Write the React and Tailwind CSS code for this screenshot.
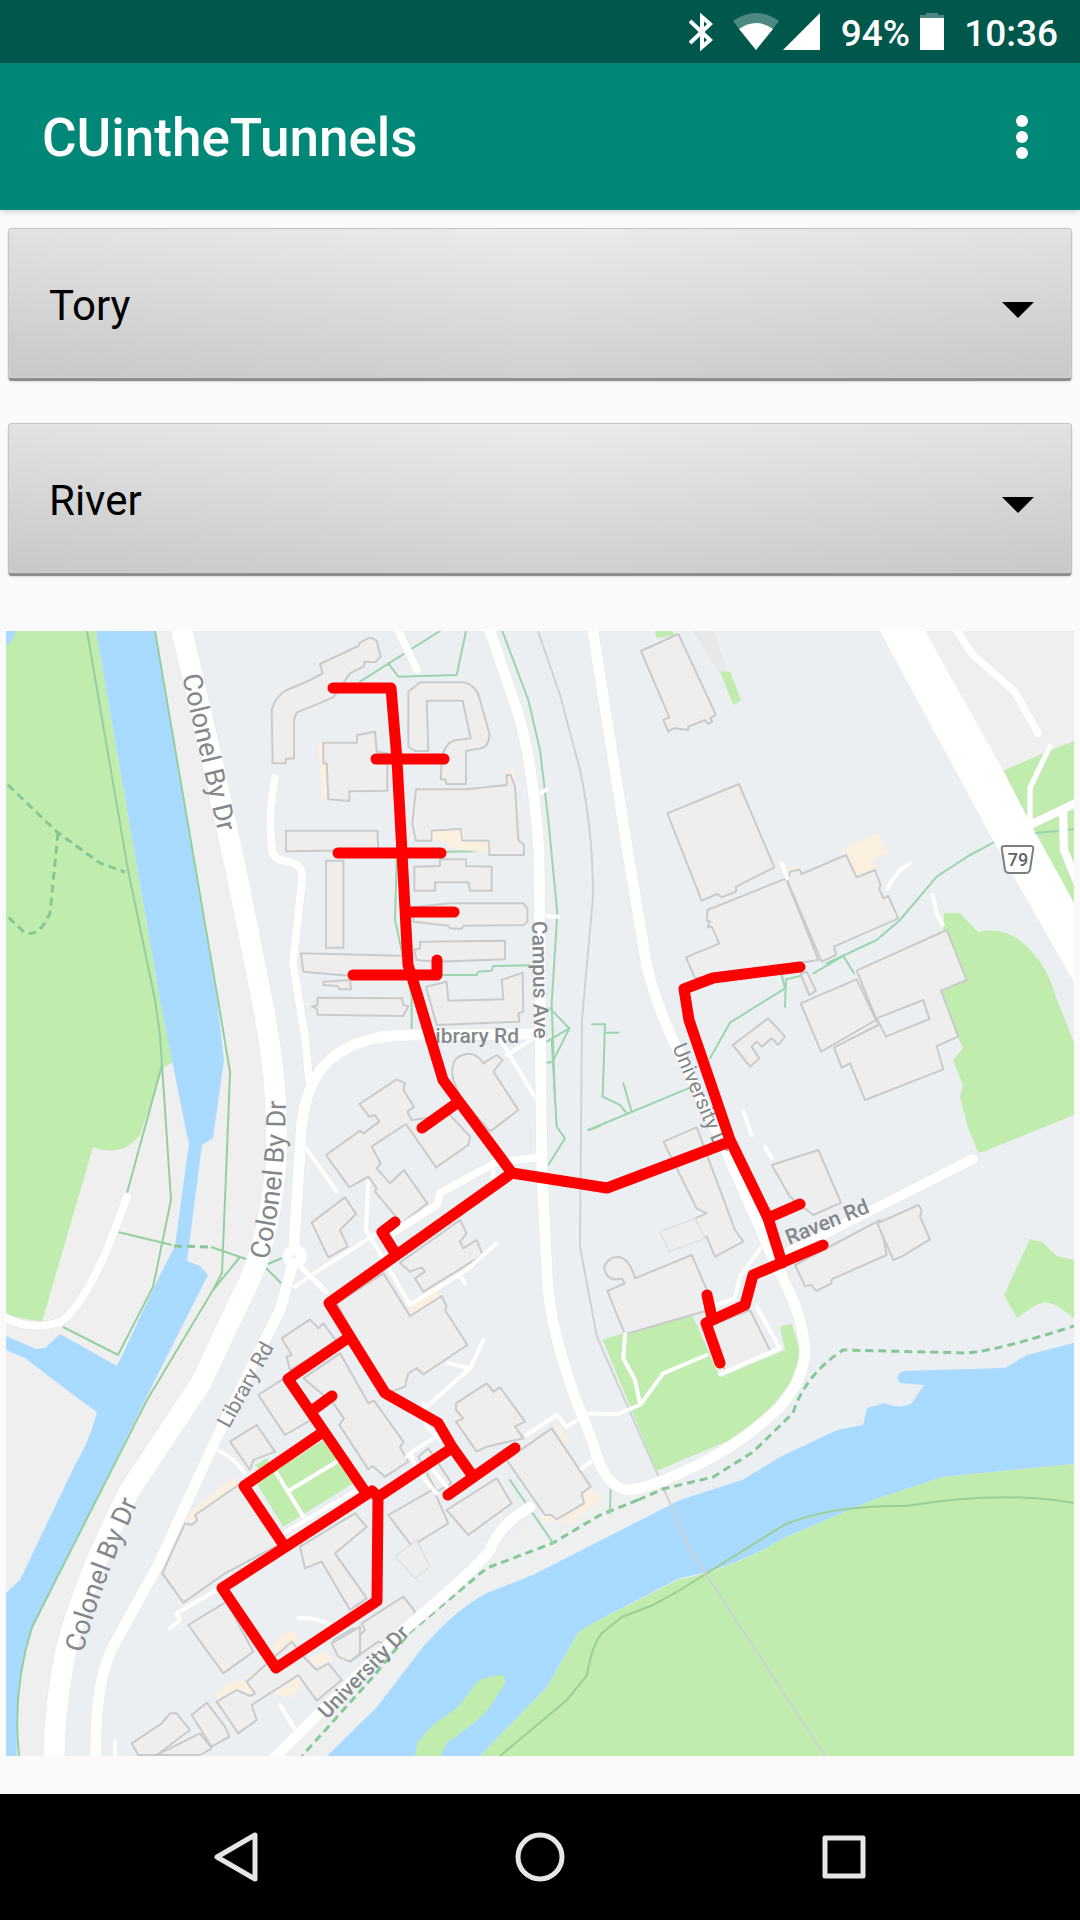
import React from "react";

const PLACES = ["Tory", "River", "Library", "Dunton", "Minto", "Residence Commons"];

/* Map artwork is drafted in district sheets at three units per map unit. */
const SHEETS = [
  {
    id: "north",
    at: "translate(250 620) scale(0.33333)",
    patches: [],
    walks: [
      "M330,185 L570,33", "M415,130 L445,170 L620,165 L648,33",
      "M757,33 L835,240 L870,390 L895,600 L922,880 L905,1150 L915,1440",
      "M440,720 L435,900 L485,1130 V1230", "M590,695 L710,693",
      "M580,1065 H680 L685,1055 L725,1052 L730,1038 L835,1036",
      "M900,1165 L958,1225 L908,1325 L885,1330", "M890,1265 L958,1225",
    ],
    lanes: ["M862,525 L890,508", "M872,888 L925,890", "M770,1305 L860,1250", "M740,1240 L860,1440"],
    peach: ["M205,368 L320,365 L312,345 L350,332 L375,340 V400 L240,430 V538 L215,535Z", "M765,450 H795 V500 H765Z"],
    buildings: [
      "M68,430 L65,270 Q75,230 110,210 L175,183 L218,160 L210,132 L325,78 L330,68 L360,52 L380,62 L392,110 L375,127 L345,125 L340,140 L300,160 L250,232 L140,278 L132,300 V415 L107,417 V430Z",
      "M220,368 H320 L322,345 L375,335 L380,395 L412,400 V512 L298,514 V543 L235,538 L230,430 H220Z",
      "M475,380 V215 L510,187 H640 Q680,195 690,240 L718,340 Q720,385 680,387 L648,393 V492 H590 L585,478 H572 L575,430 Q580,365 620,360 L662,355 L638,242 H530 L535,393 H495Z",
      "M498,508 H650 L770,495 V465 H782 L795,500 L805,660 L822,675 V705 H718 L716,662 H636 L632,627 L545,632 V662 H497 L487,610Z",
      "M108,632 H382 L385,690 L108,694Z",
      "M228,722 H280 V983 H228Z",
      "M493,740 L570,738 V718 H648 V738 L725,740 V812 H660 L655,787 H555 V812 H493Z",
      "M490,862 L600,850 H820 L832,865 V905 L820,915 L640,917 L635,927 L600,925 L595,917 L490,905Z",
      "M510,965 L765,962 V1018 L560,1025 L500,1020 L492,990 L510,985Z",
      "M153,1000 L480,1008 V1070 L280,1066 L160,1055Z",
      "M220,1085 L300,1080 L303,1108 H270 L262,1098 L220,1095Z",
      "M203,1133 L457,1135 L460,1155 L475,1158 L460,1188 L203,1184 L200,1165 L185,1160 L203,1155Z",
      "M528,1100 L590,1085 L595,1142 L760,1138 L755,1080 L818,1058 L820,1175 L805,1180 L808,1205 L560,1215Z",
    ],
    forecourts: ["M548,635 L630,630 L635,665 H715 V700 L600,685 L590,665 H548Z"],
  },
  {
    id: "northeast",
    at: "translate(560 620) scale(0.33333)",
    patches: ["M285,33 H335 L345,45 L290,55Z", "M480,155 H510 L543,240 L520,255Z"],
    walks: [
      "M1300,668 L1225,708 L1130,770 L1020,900 L950,960 L800,1030", "M760,1060 L850,1008 L882,1060",
      "M720,1068 L678,1078 L675,1160", "M665,1065 L675,1105 L510,1208 L450,1315",
      "M97,1213 H135 L128,1430", "M135,1238 H175", "M1425,640 L1540,628",
    ],
    lanes: ["M665,730 L682,775", "M1050,730 Q1010,750 983,805", "M1118,825 L1130,880 L1148,915"],
    peach: ["M840,688 L955,640 L975,690 L985,700 L940,720 L950,750 L890,775 L865,705Z", "M685,745 L720,738 V765 H685Z"],
    buildings: [
      "M243,93 L355,42 L468,285 L450,295 L457,305 L445,312 L435,300 L385,320 V330 L340,325 L325,335 L310,300 L328,292Z",
      "M322,580 L537,492 L643,742 L528,800 V815 L485,832 L472,822 L425,842Z",
      "M443,870 L678,775 L775,1020 L405,1075 L378,1012 L478,970 L455,920 L443,920 L450,905 L440,900Z",
      "M683,785 L690,755 L718,748 L725,762 L858,705 L890,772 L945,750 L962,795 L957,805 L970,835 L985,828 L1015,895 L822,980 L828,1005 L785,1025Z",
      "M722,1062 L740,1055 L768,1112 L748,1125Z",
      "M890,1052 L1160,930 L1220,1080 L1143,1112 L1195,1250 L1130,1278 L1150,1348 L915,1440 L870,1330 L845,1343 L822,1282 L955,1215 L948,1195Z",
      "M722,1150 L890,1078 L948,1200 L783,1295Z",
      "M518,1275 L625,1195 L675,1250 L655,1275 L635,1255 L605,1280 L590,1265 L575,1280 L598,1315 L570,1340Z",
    ],
    courts: ["M950,1195 L1090,1140 L1108,1197 L978,1250Z"],
  },
  {
    id: "centre",
    at: "translate(280 1040) scale(0.33333)",
    patches: [],
    walks: ["M815,0 L830,260 L855,295 L805,375", "M925,270 L960,258"],
    lanes: [
      "M75,320 L170,455", "M265,425 L258,570 L300,640 L390,795 L560,690 L650,610", "M540,705 L555,730",
      "M45,740 L110,695 L290,580", "M610,900 L570,985 L440,1100", "M505,970 L570,985", "M640,370 V410",
    ],
    peach: ["M385,800 L475,745 L485,768 L395,825Z"],
    buildings: [
      "M238,192 L350,118 L375,130 L370,150 L402,200 L382,215 L395,240 L510,225 L570,290 L565,315 L468,382 L378,252 L275,320 L302,370 L290,385 L330,430 L372,390 L442,490 L365,550 L285,455 L290,445 L265,410 L208,442 L138,345 L240,272 L250,280 L298,245 L285,225 L268,230Z",
      "M520,120 Q505,50 560,42 Q590,38 610,70 L650,45 L668,60 L640,95 L715,210 L630,275 L540,170Z",
      "M95,548 L195,472 L228,522 L180,570 L203,620 L145,652Z",
      "M360,668 L540,540 L560,580 L540,605 L550,625 L590,600 L608,645 L430,755 L405,715 L435,695 L425,682 L390,695Z",
      "M170,790 L310,700 L390,828 L485,768 L500,800 L495,810 L562,915 L430,1003 L410,985 L385,1000 L375,1040 L320,1060Z",
      "M5,895 L90,838 L115,865 L130,850 L170,905 L30,990 L20,950 L35,945Z",
    ],
  },
  {
    id: "east",
    at: "translate(580 1000) scale(0.33333)",
    patches: ["M68,1020 L330,930 L420,1132 L615,1050 L600,980 L635,972 L662,1060 L630,1150 L560,1240 L450,1320 L230,1412Z"],
    walks: ["M25,390 L325,265", "M68,290 L120,315 L140,340", "M130,250 L155,335"],
    lanes: [
      "M135,1003 L130,1075 L165,1140 L180,1210", "M380,1065 L250,1120 L180,1215 L110,1243 L0,1240",
      "M545,740 L480,830 L465,895 L410,915", "M530,920 L600,1045 L420,1122", "M490,335 L515,405", "M555,440 L575,475",
    ],
    peach: [],
    buildings: [
      "M250,425 L350,382 L465,690 L490,725 L405,770 L380,710 L360,712 L345,655 L380,640 L350,625Z",
      "M165,835 L335,765 L405,925 L135,1003 L82,873 L135,850 L125,835 Q80,850 72,800 Q90,765 120,772 Q150,780 165,835Z",
      "M575,495 L715,450 L783,608 L700,645 L630,590Z",
      "M645,795 L900,660 L920,765 L755,838 V850 L708,873 L695,855 L675,858Z",
      "M892,670 L1015,615 L1025,630 L1020,650 L1050,718 L965,770 L940,780Z",
      "M395,975 L510,930 L572,1055 L435,1115Z",
    ],
    faint: ["M240,695 L345,655 L375,715 L268,755Z"],
  },
  {
    id: "south",
    at: "translate(300 1360) scale(0.33333)",
    patches: [],
    walks: ["M630,360 L760,550", "M932,385 L930,460"],
    lanes: [
      "M680,225 L770,165 L800,200 L840,175", "M370,130 L380,200 L420,240", "M320,290 L345,270 L400,235",
      "M335,290 L350,330 L410,400", "M375,300 L440,380", "M845,325 L880,300",
    ],
    peach: ["M765,195 L785,200 L808,250 L795,262Z", "M850,395 L880,385 L900,420 L800,495 L785,470 L850,435Z", "M725,470 L760,465 L770,485 L740,485Z", "M30,895 L80,875 L100,900 L40,915Z"],
    buildings: [
      "M10,55 L120,-20 L205,130 L222,122 L310,245 L300,262 L325,305 L255,350 L218,318 L205,328 L118,195 L132,175 L100,130Z",
      "M468,130 L560,70 L580,95 L600,82 L675,185 L645,200 L670,235 L560,260 L530,275 L468,185 L490,175 L468,150Z",
      "M620,300 L755,205 L872,380 L845,400 L852,430 L770,478 L755,465 L735,465Z",
      "M265,465 L400,388 L445,490 L335,558Z",
      "M440,450 L590,355 L635,430 L505,525Z",
      "M355,290 L385,265 L455,370 L410,395Z",
      "M100,840 L160,805 L180,825 L195,810 L185,790 L310,710 L345,755 L330,800 L250,850 L235,845 L150,905 L110,880Z",
      "M0,560 L165,460 L200,500 L105,580 L200,715 L150,750 L65,605 L15,625Z",
    ],
    faint: ["M285,590 L350,540 L390,620 L345,655Z"],
  },
  {
    id: "southwest",
    at: "translate(0 1380) scale(0.33333)",
    patches: ["M770,310 L970,180 L1060,310 L850,440Z", "M765,255 L800,235 L810,250 L780,270Z"],
    walks: [],
    lanes: [
      "M650,210 Q700,230 735,280", "M510,745 L540,720 L530,700 L650,630", "M840,975 L895,1065", "M895,715 Q950,710 1000,740",
      "M830,280 L910,410", "M870,330 L1010,245", "M850,460 L1080,325", "M345,1085 V1130",
    ],
    peach: [
      "M570,395 L700,290 L720,310 L590,405Z", "M485,560 L545,410 L580,395 L595,420 L555,430 L500,560Z",
      "M645,945 L680,910 L735,900 L770,945 L710,930 L655,960Z", "M820,795 L850,760 L885,755 L895,790 L830,825Z",
      "M820,940 L900,890 L905,920 L870,955Z", "M735,890 L800,850 L810,865 L750,905Z", "M935,845 L985,825 L995,840 L945,865Z", "M745,985 L765,975 V995Z",
    ],
    buildings: [
      "M487,580 L555,430 L575,435 L592,420 L585,405 L720,312 L845,490 L675,580 L550,668Z",
      "M565,735 L680,665 L760,815 L670,880Z",
      "M775,45 L860,-10 L950,110 L855,165Z",
      "M690,185 L770,135 L825,215 L760,240 L750,270Z",
      "M740,905 L875,785 L920,840 L950,870 L985,850 L1025,900 L950,962 L895,885 L755,975 L770,1020 L715,1060 L650,965 L710,930 L750,948 L765,940Z",
      "M575,1005 L620,968 L675,1040 L688,1070 L635,1100Z",
      "M395,1090 L485,1030 L510,1000 L530,1000 L570,1050 L470,1125 L415,1125Z",
      "M470,1125 L600,1060 L635,1105 L600,1125Z",
      "M995,790 L1080,740 V820 L1050,845 L1015,830Z",
    ],
  },
];

const ROADS = [
  ["M182 631 L212 760 L236 870 L262 1000 Q280 1090 276 1165 Q268 1250 240 1300 L201 1383 L130 1490 Q84 1580 66 1650 Q54 1710 54 1760", 21],
  ["M488 625 L517 710 Q533 760 539 853 L541 1100 L542 1173 L547 1273 Q549 1330 580 1410 L593 1443 Q604 1488 628 1490 Q650 1488 680 1473 Q735 1450 780 1407 Q812 1370 803 1335 Q800 1310 777 1267 L727 1153 L673 1040 Q655 1000 647 967 L627 847 L592 625", 11],
  ["M540 1034 L410 1035 Q350 1035 323 1067 Q304 1090 301 1133 L293 1263 L280 1310 L217 1437 L157 1567 L115 1643 Q94 1680 96 1760", 11],
  ["M275 778 Q268 810 272 850 Q273 860 290 862 Q304 866 302 880 L293 963 L305 1037 L309 1080", 8],
  ["M397 628 L417 670", 8],
  ["M2 1316 Q30 1332 60 1322 Q80 1310 107 1250 L127 1197", 8],
  ["M530 1507 Q500 1524 490 1550 Q475 1570 407 1627 L270 1762", 11],
  ["M540 1157 L495 1163 L440 1193 L437 1205 L393 1233", 8],
  ["M787 1253 L973 1159", 10],
  ["M955 628 L973 655 L1015 692 L1038 733", 8],
  ["M1050 746 L1030 788 V822", 5],
  ["M1028 826 L1078 802", 8],
  ["M1063 812 L1064 850 L1078 884", 8],
  ["M296 1262 L326 1292", 6],
];

const ROUTES = [
  "M333 688 H391 L397 760 L402 853 L408 965 L412 977 L443 1080 L460 1103 L512 1173 L607 1188 L729 1142",
  "M376 759 H444", "M338 853 H441", "M407 912 H454", "M353 975 H437 V960", "M422 1128 L457 1103",
  "M800 967 L713 978 L684 989 L689 1020 L730 1140 L768 1218 L782 1263",
  "M768 1218 L800 1204",
  "M823 1245 L753 1275 L745 1305 L706 1323 L720 1363", "M707 1295 L712 1318",
  "M512 1173 L329 1303 L385 1393 L438 1423 L452 1447 L472 1475",
  "M395 1253 L382 1232 L395 1222", "M448 1495 L515 1448",
  "M348 1338 L288 1379 L323 1430 L366 1493", "M332 1396 L313 1410", "M323 1432 L244 1486 L283 1544",
  "M452 1448 L378 1497 L377 1601 L276 1668 L222 1588 L372 1491 L378 1497",
];

function CampusMap() {
  return (
    <svg viewBox="6 631 1068 1125" className="block w-full h-auto" role="img" aria-label="Campus tunnel map">
      <rect x="6" y="631" width="1068" height="1125" fill="#ebeff2" />
      <path d="M6 631 H182 L262 1000 L276 1165 L240 1300 L130 1490 L66 1650 L54 1756 H6Z" fill="#efefef" />
      <path d="M925 631 H1074 V903 L1003 770Z" fill="#efefef" />
      <path d="M280 1756 L487 1553 L560 1500 L680 1473 V1520 L327 1756Z" fill="#eeefef" />

      {/* parkland */}
      <g fill="#c0ecae">
        <path d="M6 631 H96 L160 1000 L173 1062 L163 1068 L140 1135 Q122 1158 93 1147 L42 1322 L6 1315Z" />
        <path d="M1003 771 L1046 752 L1074 741 V903 L1030 822Z" />
        <path d="M944 913 H960 L978 932 Q1012 924 1036 957 Q1048 970 1057 1000 L1074 1042 V1115 L983 1152 H978 L968 1128 L960 1097 L963 1085 L953 1060 L963 1048 L940 1000Z" />
        <path d="M1030 1239 L1042 1242 L1057 1256 L1074 1260 V1318 L1060 1308 Q1046 1298 1033 1307 L1017 1318 L1004 1295Z" />
      </g>
      <path d="M693 631 H713 L728 672 H718Z" fill="#e6e8ea" />

      {/* water */}
      <g fill="#a9daff">
        <path d="M6 631 H16 Q13 642 6 646Z" />
        <path d="M96 631 L160 1000 L187 1135 L189 1143 L175 1246 L160 1275 L117 1366 L60 1334 L45 1348 L36 1349 L6 1336 V1350 L25 1358 L80 1400 L97 1412 Q90 1440 75 1465 L20 1580 L6 1593 V1756 H17 Q14 1680 32 1630 L155 1380 L208 1275 L200 1266 L187 1261 L202 1145 L213 1138 L224 1060 L217 1000 L155 631Z" />
        <path d="M1074 1343 L1027 1355 L1005 1368 L903 1371 Q894 1376 900 1383 L924 1385 L912 1403 Q900 1410 885 1403 L867 1408 L863 1425 L837 1430 L780 1457 L742 1480 L680 1500 L533 1575 L487 1593 Q455 1610 423 1647 L377 1707 L327 1756 H480 L547 1687 L578 1633 L593 1623 L680 1578 Q730 1570 784 1538 L873 1500 L943 1477 L1074 1464Z" />
      </g>
      <g fill="#c0ecae">
        <path d="M480 1756 L547 1687 L557 1670 L578 1633 L593 1623 L680 1579 Q730 1570 784 1538 L873 1500 L943 1477 L1074 1464 V1756Z" />
        <path d="M415 1756 L417 1743 L433 1725 L458 1707 L477 1682 Q485 1676 503 1675 L506 1682 L490 1707 L478 1720 L447 1743 L440 1756Z" />
      </g>
      <path d="M500 1756 L567 1700 L587 1675 Q592 1645 602 1633 L622 1617 L653 1605 L680 1590 L784 1525 Q830 1505 906 1506 Q1000 1490 1074 1503" fill="none" stroke="#9ccf96" strokeWidth="2" />

      {/* rail line */}
      <path d="M538 631 L560 695 L580 770 Q593 830 593 897 L582 1020 L580 1247 L597 1337 L660 1480 L690 1550 L825 1756" fill="none" stroke="#cfd2d5" strokeWidth="2" />

      {/* waterside paths */}
      <g fill="none" stroke="#93cf9f" strokeWidth="2">
        <path d="M155 631 L218 1000 L230 1072 L227 1150 L222 1273 L213 1290" />
        <path d="M240 1257 L213 1290 L147 1400 L32 1627 Q12 1690 19 1756" />
        <path d="M87 631 L128 870 L155 1000 L160 1035 L162 1065 L171 1200 L153 1287 L118 1355 L63 1327" />
        <path d="M162 1065 L127 1193" />
        <path d="M118 1232 L172 1245" />
        <path d="M211 1247 L246 1259" />
        <path d="M268 1264 L282 1258 M266 1268 L282 1284" />
      </g>
      <g fill="none" stroke="#85c896" strokeWidth="3" strokeDasharray="8 5">
        <path d="M8 785 L57 832 L100 863 L125 872" />
        <path d="M58 833 L50 913 Q40 937 25 933 L6 915" />
        <path d="M638 1500 L663 1489 L713 1477 L753 1452 L793 1413 Q805 1375 843 1350 L967 1353 Q1000 1350 1074 1326" />
        <path d="M638 1500 L600 1515 L553 1543 L487 1568 L410 1632 L372 1678 L302 1756" />
        <path d="M174 1246 L211 1247" />
      </g>

      {SHEETS.map((s) => (
        <g key={s.id} transform={s.at} strokeLinejoin="round" strokeLinecap="round">
          {s.patches.map((d) => <path key={d} d={d} fill="#c0ecae" />)}
          {s.walks.map((d) => <path key={d} d={d} fill="none" stroke="#9ad5ac" strokeWidth="6" />)}
          {s.peach.map((d) => <path key={d} d={d} fill="#fbefe0" />)}
          {s.buildings.map((d) => <path key={d} d={d} fill="#eeeeee" stroke="#c9cacb" strokeWidth="6" />)}
          {(s.forecourts || []).map((d) => <path key={d} d={d} fill="#fbefe0" />)}
          {(s.faint || []).map((d) => <path key={d} d={d} fill="#eceeef" stroke="#dedfe0" strokeWidth="4" />)}
          {(s.courts || []).map((d) => <path key={d} d={d} fill="#ebeff2" stroke="#c9cacb" strokeWidth="6" />)}
          {s.lanes.map((d) => <path key={d} d={d} fill="none" stroke="#ffffff" strokeWidth="12" />)}
        </g>
      ))}

      {/* roads */}
      <g fill="none" strokeLinecap="round" strokeLinejoin="round">
        {ROADS.map(([d, w]) => <path key={d} d={d} stroke="#e3e5e7" strokeWidth={w + 1} />)}
        {ROADS.map(([d, w]) => <path key={d} d={d} stroke="#ffffff" strokeWidth={w} />)}
      </g>
      <path d="M880 631 H925 L1003 770 L1035 833 L1074 903 V982 L993 840Z" fill="#ffffff" />
      <circle cx="295" cy="1257" r="12" fill="#ffffff" />
      <circle cx="294" cy="1257" r="2" fill="#eef0f1" />

      {/* route shield */}
      <path d="M1004 846 H1031 Q1034 846 1033 850 L1030 870 Q1029 873 1026 873 H1009 Q1006 873 1005 870 L1002 850 Q1001 846 1004 846Z" fill="#ffffff" stroke="#7c7f82" strokeWidth="2" />
      <text x="1018" y="866" textAnchor="middle" className="text-[18px] font-medium" fill="#5f6265">79</text>

      {/* road names */}
      <defs>
        <path id="colonel-mid" d="M268 1260 Q287 1180 286 1080" />
        <path id="colonel-low" d="M83 1653 Q102 1580 146 1485" />
      </defs>
      <g fill="#85888b">
        <text transform="translate(182 676) rotate(77)" className="text-[27px]">Colonel By Dr</text>
        <text className="text-[27px]"><textPath href="#colonel-mid">Colonel By Dr</textPath></text>
        <text className="text-[27px]"><textPath href="#colonel-low">Colonel By Dr</textPath></text>
        <text transform="translate(229 1429) rotate(-61)" className="text-[21px]">Library Rd</text>
        <text transform="translate(532 921) rotate(89)" className="text-[21px] font-medium">Campus Ave</text>
        <text x="424" y="1043" className="text-[21px] font-medium">Library Rd</text>
        <text transform="translate(672 1047) rotate(67)" className="text-[21px]">University Dr</text>
        <text transform="translate(789 1245) rotate(-22)" className="text-[21px] font-medium">Raven Rd</text>
        <text transform="translate(327 1720) rotate(-46)" className="text-[21px] font-medium">University Dr</text>
      </g>

      {/* tunnels */}
      <g fill="none" stroke="#ff0000" strokeWidth="11" strokeLinecap="round" strokeLinejoin="round">
        {ROUTES.map((d) => <path key={d} d={d} />)}
      </g>
    </svg>
  );
}

function StatusBar() {
  return (
    <div className="flex h-[63px] items-center justify-end bg-[#00574b] pr-[22px] text-[37px] font-medium leading-none text-white">
      <svg viewBox="0 0 24 38" className="mr-5 h-[38px] w-6" fill="none" stroke="#fff" strokeWidth="4" aria-label="Bluetooth">
        <path d="M1 8 L21 27 L13 34 V4 L21 11 L1 30" />
      </svg>
      <svg viewBox="0 0 46 38" className="mr-1 h-[38px] w-[46px]" aria-label="Wi-Fi">
        <path d="M0 8 Q23 -8 46 8 L23 37Z" fill="#4d8981" />
        <path d="M6 16 Q23 4 40 16 L23 37Z" fill="#fff" />
      </svg>
      <svg viewBox="0 0 38 38" className="mr-5 h-[38px] w-[38px]" aria-label="Signal">
        <path d="M37 0 V37 H0Z" fill="#fff" />
      </svg>
      <span className="pt-[3px]">94%</span>
      <svg viewBox="0 0 24 38" className="ml-[10px] mr-5 h-[38px] w-6" aria-label="Battery">
        <path d="M6 0 H18 V2 H24 V6 H0 V2 H6Z" fill="#4d8981" />
        <path d="M0 5 H24 V37 H0Z" fill="#fff" />
      </svg>
      <span className="pt-[3px]">10:36</span>
    </div>
  );
}

function Spinner({ id, label, value }) {
  return (
    <div className="relative">
      <select
        id={id}
        aria-label={label}
        defaultValue={value}
        className="block h-[153px] w-full appearance-none rounded border border-b-[3px] border-[#c4c4c4] border-b-[#8e8e8e] bg-linear-to-b from-[#ebebeb] to-[#d0d0d0] pt-1 pl-10 pr-20 text-[42px] text-black shadow-sm outline-none"
      >
        {PLACES.map((p) => <option key={p}>{p}</option>)}
      </select>
      <div className="pointer-events-none absolute inset-px bottom-1 rounded bg-linear-to-r from-black/4 via-transparent to-black/4" />
      <svg viewBox="0 0 32 16" className="pointer-events-none absolute right-[38px] top-[74px] h-4 w-8" aria-hidden="true">
        <path d="M0 0 H32 L16 16Z" fill="#000" />
      </svg>
    </div>
  );
}

export default function App() {
  return (
    <div className="flex min-h-screen flex-col bg-[#fafafa] font-['Roboto',sans-serif]">
      <StatusBar />
      <header className="z-10 flex h-[147px] items-center justify-between bg-[#008777] px-[42px] shadow-md">
        <h1 className="pt-1 text-[53px] font-medium text-white">CUintheTunnels</h1>
        <button type="button" aria-label="More options" className="flex h-16 w-8 items-center justify-center">
          <svg viewBox="0 0 12 44" className="h-11 w-3" fill="#fff">
            <circle cx="6" cy="6" r="6" />
            <circle cx="6" cy="22" r="6" />
            <circle cx="6" cy="38" r="6" />
          </svg>
        </button>
      </header>
      <main className="flex-1 pt-[18px]">
        <form className="flex flex-col gap-[42px] px-2">
          <Spinner id="from" label="From" value="Tory" />
          <Spinner id="to" label="To" value="River" />
        </form>
        <div className="mt-[55px] px-[6px]">
          <CampusMap />
        </div>
      </main>
      <nav className="flex h-[126px] bg-black px-[84px]">
        <button type="button" aria-label="Back" className="flex flex-1 items-center justify-center">
          <svg viewBox="0 0 50 50" className="h-[50px] w-[50px]" fill="none" stroke="#e6e6e6" strokeWidth="5" strokeLinejoin="round">
            <path d="M44 3 V47 L6 25Z" />
          </svg>
        </button>
        <button type="button" aria-label="Home" className="flex flex-1 items-center justify-center">
          <svg viewBox="0 0 50 50" className="h-[50px] w-[50px]" fill="none" stroke="#e6e6e6" strokeWidth="5">
            <circle cx="25" cy="25" r="22" />
          </svg>
        </button>
        <button type="button" aria-label="Overview" className="flex flex-1 items-center justify-center">
          <svg viewBox="0 0 50 50" className="h-[50px] w-[50px]" fill="none" stroke="#e6e6e6" strokeWidth="5" strokeLinejoin="round">
            <path d="M6 6 H44 V44 H6Z" />
          </svg>
        </button>
      </nav>
    </div>
  );
}
